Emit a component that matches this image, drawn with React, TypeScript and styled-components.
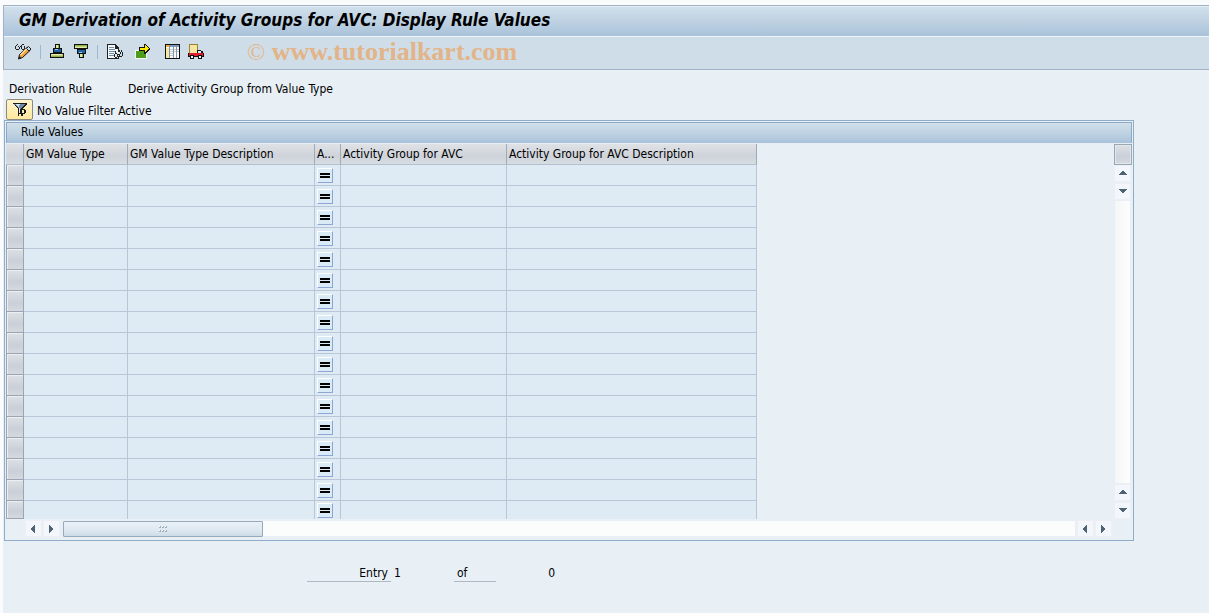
import React from 'react';
import styled, { createGlobalStyle, css } from 'styled-components';

const GlobalStyle = createGlobalStyle`
  * { box-sizing: border-box; }
  body {
    margin: 0;
    background: #fafbfd;
    color: #000;
    font: 12px/16px 'DejaVu Sans Condensed', 'DejaVu Sans', sans-serif;
    font-stretch: condensed;
  }
  button { font: inherit; color: inherit; padding: 0; margin: 0; }
`;

const Page = styled.div`
  min-height: 100vh;
  padding: 5px 0 0 3px;
  display: flex;
  flex-direction: column;
`;

const Header = styled.header`
  border: 1px solid #a3b1c6;
  border-right: 0;
`;

const TitleBar = styled.div`
  height: 30px;
  padding-left: 15px;
  display: flex;
  align-items: center;
  background: linear-gradient(#d0dfeb, #c0d3e3 45%, #a9c2da);
  border-top: 1px solid #e4edf4;
`;

const Title = styled.h1`
  margin: 0;
  padding-bottom: 3px;
  font: italic bold 17px/20px 'DejaVu Sans Condensed', 'DejaVu Sans', sans-serif;
  font-stretch: condensed;
  white-space: nowrap;
`;

const Toolbar = styled.div`
  height: 33px;
  padding: 0 0 2px 10px;
  display: flex;
  align-items: center;
  background: #cfdde8;
  border-top: 1px solid #eef4f9;
`;

const ToolButton = styled.button<{ $gap?: number }>`
  width: 18px;
  height: 18px;
  margin-right: ${(p) => p.$gap ?? 0}px;
  display: flex;
  border: 0;
  background: none;
`;

const Separator = styled.span<{ $gap: number }>`
  width: 1px;
  height: 14px;
  margin-right: ${(p) => p.$gap}px;
  background: #9db8d4;
`;

const Watermark = styled.span`
  margin-left: 42px;
  color: #e2b488;
  font: bold 26px/30px 'Liberation Serif', serif;
  white-space: nowrap;
`;

const CopyMark = styled.span`
  font-weight: 400;
  font-size: 24px;
`;

const Main = styled.main`
  flex: 1;
  background: #e8f0f6;
  padding: 11px 75px 0 1px;
`;

const RuleLine = styled.dl`
  margin: 0;
  padding-left: 5px;
  height: 18px;
  display: grid;
  grid-template-columns: 119px 1fr;
  dt, dd { margin: 0; }
`;

const FilterLine = styled.div`
  padding-left: 2px;
  height: 21px;
  display: flex;
  align-items: center;
  gap: 4px;
  line-height: 18px;
`;

const FilterText = styled.span`
  padding-top: 2px;
`;

const FilterButton = styled.button`
  width: 27px;
  height: 21px;
  display: flex;
  align-items: center;
  justify-content: center;
  border: 1px solid #8c8a7c;
  border-radius: 2px;
  background: linear-gradient(#fff5cc, #ffe9a0);
`;

const Panel = styled.section`
  border: 1px solid #8fadcb;
  padding: 1px;
  display: flex;
  flex-direction: column;
`;

const PanelTitle = styled.h2`
  margin: 0;
  height: 21px;
  padding-left: 14px;
  font: inherit;
  line-height: 19px;
  border: 1px solid #8fa9c4;
  border-bottom: 0;
  background: linear-gradient(#d0dfeb, #c1d4e3 45%, #a9c2da);
`;

const GridArea = styled.div`
  display: flex;
  justify-content: space-between;
  padding-top: 1px;
`;

const Table = styled.table`
  width: 751px;
  table-layout: fixed;
  border-collapse: separate;
  border-spacing: 0;
`;

const metal = css`
  background: linear-gradient(#dde1e5, #cacfd8 60%, #d5d9df);
`;

const HeadCell = styled.th`
  height: 21px;
  padding: 0 0 0 2px;
  font-weight: 400;
  line-height: 20px;
  text-align: left;
  white-space: nowrap;
  overflow: hidden;
  border-right: 1px solid #9dabb9;
  border-bottom: 1px solid #b4c0d0;
  background: linear-gradient(#dfe2e5, #cfd3da 60%, #d6dee2);
`;

const RowHead = styled.td<{ $last?: boolean }>`
  height: ${(p) => (p.$last ? 18 : 21)}px;
  padding: 0;
`;

const RowButton = styled.button<{ $last?: boolean }>`
  display: block;
  width: 18px;
  height: ${(p) => (p.$last ? 18 : 21)}px;
  border: 1px solid #9aa4b2;
  border-top: 0;
  border-radius: 0;
  box-shadow: inset 1px 1px #eceef0;
  ${metal}
`;

const Cell = styled.td<{ $last?: boolean }>`
  height: ${(p) => (p.$last ? 18 : 21)}px;
  padding: 0;
  background: #dfebf4;
  border-right: 1px solid #b9c6d6;
  border-bottom: ${(p) => (p.$last ? 0 : '1px solid #b9c6d6')};
`;

const EqualsButton = styled.button`
  display: flex;
  margin-left: 2px;
  width: 16px;
  height: 15px;
  border: 1px solid #fff;
  border-right-color: #8fa5d6;
  border-bottom-color: #8fa5d6;
  background: #d9ebf7;
`;

const SideBar = styled.div`
  width: 18px;
  display: flex;
  flex-direction: column;
`;

const ConfigButton = styled.button`
  width: 18px;
  height: 21px;
  border: 1px solid #9aa8b5;
  box-shadow: inset 0 0 0 1px #e4e7ea;
  ${metal}
`;

const ScrollButton = styled.button`
  flex: none;
  width: 17px;
  height: 17px;
  display: flex;
  align-items: center;
  justify-content: center;
  border: 1px solid #eceff5;
  background: #f3f7fb;
`;

const VerticalTrack = styled.div`
  flex: 1;
  width: 15px;
  margin: 1px;
  background: linear-gradient(90deg, #f5f6f7, #fdfdfd);
`;

const ScrollStack = styled.div`
  display: flex;
  flex-direction: column;
  gap: 1px;
`;

const BottomBar = styled.div`
  height: 20px;
  padding: 1px 20px 2px 19px;
  display: flex;
  align-items: center;
  gap: 1px;
`;

const HorizontalTrack = styled.div`
  flex: 1;
  height: 15px;
  margin: 0 1px 0 2px;
  background: #fbfcfc;
`;

const Thumb = styled.div`
  width: 200px;
  height: 16px;
  display: flex;
  align-items: center;
  justify-content: center;
  border: 1px solid #97aabb;
  border-radius: 1px;
  background: linear-gradient(#e9f0f7, #dfe9f2 55%, #cedce7);
`;

const Pager = styled.div`
  margin-top: 24px;
  padding-left: 303px;
  display: flex;
`;

const PagerLabel = styled.span<{ $width: number; $right?: boolean }>`
  width: ${(p) => p.$width}px;
  height: 17px;
  padding: 0 3px;
  text-align: ${(p) => (p.$right ? 'right' : 'left')};
  border-bottom: 1px solid #b0b9c3;
`;

const PagerValue = styled.span<{ $width: number; $right?: boolean }>`
  width: ${(p) => p.$width}px;
  padding-left: 3px;
  text-align: ${(p) => (p.$right ? 'right' : 'left')};
`;

const Svg = ({ children, w = 18, h = 18 }: { children: React.ReactNode; w?: number; h?: number }) => (
  <svg width={w} height={h} viewBox={`0 0 ${w} ${h}`} shapeRendering="crispEdges" aria-hidden="true">
    {children}
  </svg>
);

const PencilIcon = () => (
  <Svg>
    <path d="M1 3h1v3h-1zM2 6h3v1h-3zM2 2h1v1h-1zM5 4h1v2h-1zM4 3h1v1h-1zM6 3h1v1h-1zM7 2h1v4h-1zM8 6h2v1h-2zM10 3h1v3h-1zM8 1h2v1h-2zM3 1h1v1h-1z" fill="#222" />
    <g shapeRendering="auto">
      <path d="M4.500 16l1-4.500 8-7.500 3 3-8 7.500z" fill="#f5a040" stroke="#111" />
      <path d="M6.500 12l6.500-6.500" stroke="#ffe79a" strokeWidth="1.500" />
      <path d="M12.500 5.500l2-2 2.500 2.500-2 2z" fill="#c5d9f2" stroke="#222" />
      <path d="M4.500 16l1-3 2 2z" fill="#222" />
    </g>
  </Svg>
);

const StackShape = () => (
  <>
    <path d="M7 1h5v4h-5z" fill="#111" />
    <path d="M8 2h3v3h-3z" fill="#dfe9a0" />
    <path d="M10 2h1v3h-1z" fill="#91b04a" />
    <path d="M5 5h9v5h-9z" fill="#111" />
    <path d="M6 6h7v3h-7z" fill="#1f62a0" />
    <path d="M7 6h3v1h-3z" fill="#9cc3e6" />
    <path d="M2 10h14v5h-14z" fill="#111" />
    <path d="M3 11h12v3h-12z" fill="#91b04a" />
    <path d="M3 11h12v2h-12z" fill="#bdd172" />
    <path d="M3 11h11v1h-11z" fill="#e0ebae" />
  </>
);

const StackUpIcon = () => <Svg><StackShape /></Svg>;
const StackDownIcon = () => (
  <Svg><g transform="translate(0 16) scale(1 -1)"><StackShape /></g></Svg>
);

const DocumentIcon = () => (
  <Svg>
    <path d="M1 1h9v1h1v1h1v1h1v12h-12z" fill="#222" />
    <path d="M2 2h7v4h3v9h-10z" fill="#f5f9fc" />
    <path d="M3 4h5v1h-5zM3 6h6v1h-6zM3 8h7v1h-7zM3 10h5v1h-5zM3 12h5v1h-5z" fill="#6e8aa5" />
    <path d="M9 9h3v6h-3zM12 9h2v4h-2z" fill="#e3edf5" />
    <path d="M9 8h1v3h-1zM8 11h1v3h-1zM9 14h2v1h-2zM11 11h1v3h-1zM9 10h2v1h-2zM12 11h1v1h-1zM13 11h1v3h-1zM14 13h2v1h-2zM16 9h1v4h-1zM14 9h1v2h-1zM15 7h1v2h-1zM13 7h1v2h-1z" fill="#222" />
  </Svg>
);

const ArrowIcon = () => (
  <Svg>
    <path d="M1 7h12v9h-12z" fill="#f3f8ef" />
    <path d="M2 8h10v7h-10z" fill="#4d9c1c" />
    <path d="M5 4h5v-3h2v1h1v1h1v1h1v1h1v2h-1v1h-1v1h-1v1h-1v1h-2v-3h-5z" fill="#111" />
    <path d="M6 5h5v-3h1v1h1v1h1v1h1v1h-1v1h-1v1h-1v1h-1v-2h-5z" fill="#ffe900" />
  </Svg>
);

const LayoutIcon = () => (
  <Svg>
    <path d="M1 1h15v15h-15z" fill="#111" />
    <path d="M2 2h13v13h-13z" fill="#fbfbf6" />
    <path d="M2 2h3v2h-3z" fill="#f2ae27" />
    <path d="M6 2h9v2h-9z" fill="#7f9bc0" />
    <path d="M2 5h3v10h-3z" fill="#f8e7a2" />
    <path d="M5 2h1v13h-1zM9 2h1v13h-1zM12 2h1v13h-1z" fill="#8094b0" />
    <path d="M6 6h3v1h-3zM6 8h3v1h-3zM6 10h3v1h-3zM6 12h3v1h-3zM10 6h2v1h-2zM10 8h2v1h-2zM13 6h2v1h-2zM13 8h2v1h-2z" fill="#c1cad6" />
  </Svg>
);

const TruckIcon = () => (
  <Svg>
    <path d="M2 1h9v9h-9z" fill="#9a812e" />
    <path d="M3 2h7v8h-7z" fill="#f6e6a2" />
    <path d="M10 7h4v1h2v2h1v4h-16v-4h9z" fill="#111" />
    <path d="M11 8h3v2h-3z" fill="#d9edf6" />
    <path d="M2 10h14v3h-14z" fill="#df1f2c" />
    <path d="M3 12h4v4h-4zM11 12h4v4h-4z" fill="#111" />
    <path d="M4 13h2v2h-2zM12 13h2v2h-2z" fill="#f4f4f4" />
  </Svg>
);

const FilterIcon = () => (
  <Svg w={16} h={16}>
    <path d="M0 1h15v2h-1v1h-1v1h-1v1h-1v8h-1v-1h-1v-1h-2v2h-1v-8h-1v-1h-1v-1h-1v-1h-1v-1h-1v-1h-1z" fill="#1c1c1c" />
    <path d="M2 2h11v1h-1v1h-1v1h-1v1h-1v5h-2v-5h-1v-1h-1v-1h-1v-1h-2z" fill="#6f8ba9" />
    <path d="M4 2h4v1h-1v2h-1v-1h-1v-1h-1zM7 6h1v5h-1z" fill="#d4e4f0" />
    <path d="M8 7h5v1h1v3h-1v1h-3v2h-1v-2h-1z" fill="#1c1c1c" />
    <path d="M10 8h2v3h-2z" fill="#fff0b4" />
  </Svg>
);

const arrowPaths = {
  up: 'M4 1h1v1h1v1h1v1h1v1h-8v-1h1v-1h1v-1h1v-1z',
  down: 'M0 1h8v1h-1v1h-1v1h-1v1h-2v-1h-1v-1h-1v-1h-1z',
  left: 'M5 0v8h-1v-1h-1v-1h-1v-1h-1v-2h1v-1h1v-1h1v-1z',
  right: 'M1 0v8h1v-1h1v-1h1v-1h1v-2h-1v-1h-1v-1h-1v-1z',
};

const ScrollArrow = ({ to }: { to: keyof typeof arrowPaths }) => (
  <ScrollButton aria-label={`Scroll ${to}`}>
    <Svg w={8} h={8}><path d={arrowPaths[to]} fill="#4e6373" /></Svg>
  </ScrollButton>
);

const columns = [
  { title: 'GM Value Type', width: 104 },
  { title: 'GM Value Type Description', width: 187 },
  { title: 'A...', width: 26 },
  { title: 'Activity Group for AVC', width: 166 },
  { title: 'Activity Group for AVC Description', width: 250 },
];
const assignColumn = 2;
const rows = Array.from({ length: 17 }, (_, i) => i);

export default function App() {
  return (
    <Page>
      <GlobalStyle />
      <Header>
        <TitleBar>
          <Title>GM Derivation of Activity Groups for AVC: Display Rule Values</Title>
        </TitleBar>
        <Toolbar>
          <ToolButton aria-label="Display / Change" $gap={8}><PencilIcon /></ToolButton>
          <Separator $gap={7} />
          <ToolButton aria-label="First entry" $gap={6}><StackUpIcon /></ToolButton>
          <ToolButton aria-label="Last entry" $gap={7}><StackDownIcon /></ToolButton>
          <Separator $gap={8} />
          <ToolButton aria-label="Display document" $gap={10}><DocumentIcon /></ToolButton>
          <ToolButton aria-label="Execute" $gap={12}><ArrowIcon /></ToolButton>
          <ToolButton aria-label="Layout" $gap={5}><LayoutIcon /></ToolButton>
          <ToolButton aria-label="Transport"><TruckIcon /></ToolButton>
          <Watermark><CopyMark>©</CopyMark> www.tutorialkart.com</Watermark>
        </Toolbar>
      </Header>
      <Main>
        <RuleLine>
          <dt>Derivation Rule</dt>
          <dd>Derive Activity Group from Value Type</dd>
        </RuleLine>
        <FilterLine>
          <FilterButton aria-label="Filter values"><FilterIcon /></FilterButton>
          <FilterText>No Value Filter Active</FilterText>
        </FilterLine>
        <Panel>
          <PanelTitle>Rule Values</PanelTitle>
          <GridArea>
            <Table>
              <colgroup>
                <col style={{ width: 18 }} />
                {columns.map((c) => <col key={c.title} style={{ width: c.width }} />)}
              </colgroup>
              <thead>
                <tr>
                  <HeadCell aria-label="Row selection" />
                  {columns.map((c) => <HeadCell key={c.title}>{c.title}</HeadCell>)}
                </tr>
              </thead>
              <tbody>
                {rows.map((r) => {
                  const last = r === rows.length - 1;
                  return (
                    <tr key={r}>
                      <RowHead $last={last}>
                        <RowButton aria-label={`Select row ${r + 1}`} $last={last} />
                      </RowHead>
                      {columns.map((c, i) => (
                        <Cell key={c.title} $last={last}>
                          {i === assignColumn && (
                            <EqualsButton aria-label="Assign">
                              <Svg w={14} h={13}><path d="M2 4h10v2h-10zM2 7h10v2h-10z" fill="#000" /></Svg>
                            </EqualsButton>
                          )}
                        </Cell>
                      ))}
                    </tr>
                  );
                })}
              </tbody>
            </Table>
            <SideBar>
              <ConfigButton aria-label="Table settings" />
              <ScrollStack>
                <ScrollArrow to="up" />
                <ScrollArrow to="down" />
              </ScrollStack>
              <VerticalTrack />
              <ScrollStack>
                <ScrollArrow to="up" />
                <ScrollArrow to="down" />
              </ScrollStack>
            </SideBar>
          </GridArea>
          <BottomBar>
            <ScrollArrow to="left" />
            <ScrollArrow to="right" />
            <HorizontalTrack>
              <Thumb>
                <Svg w={8} h={6}>
                  <path d="M0 0h2v2h-2zM3 0h2v2h-2zM6 0h2v2h-2zM0 4h2v2h-2zM3 4h2v2h-2zM6 4h2v2h-2z" fill="#fff" />
                  <path d="M1 0h1v2h-1zM4 0h1v2h-1zM7 0h1v2h-1zM1 4h1v2h-1zM4 4h1v2h-1zM7 4h1v2h-1zM0 1h1v1h-1zM3 1h1v1h-1zM6 1h1v1h-1zM0 5h1v1h-1zM3 5h1v1h-1zM6 5h1v1h-1z" fill="#9fb1c0" />
                </Svg>
              </Thumb>
            </HorizontalTrack>
            <ScrollArrow to="left" />
            <ScrollArrow to="right" />
          </BottomBar>
        </Panel>
        <Pager>
          <PagerLabel $width={84} $right>Entry</PagerLabel>
          <PagerValue $width={63}>1</PagerValue>
          <PagerLabel $width={42}>of</PagerLabel>
          <PagerValue $width={59} $right>0</PagerValue>
        </Pager>
      </Main>
    </Page>
  );
}
